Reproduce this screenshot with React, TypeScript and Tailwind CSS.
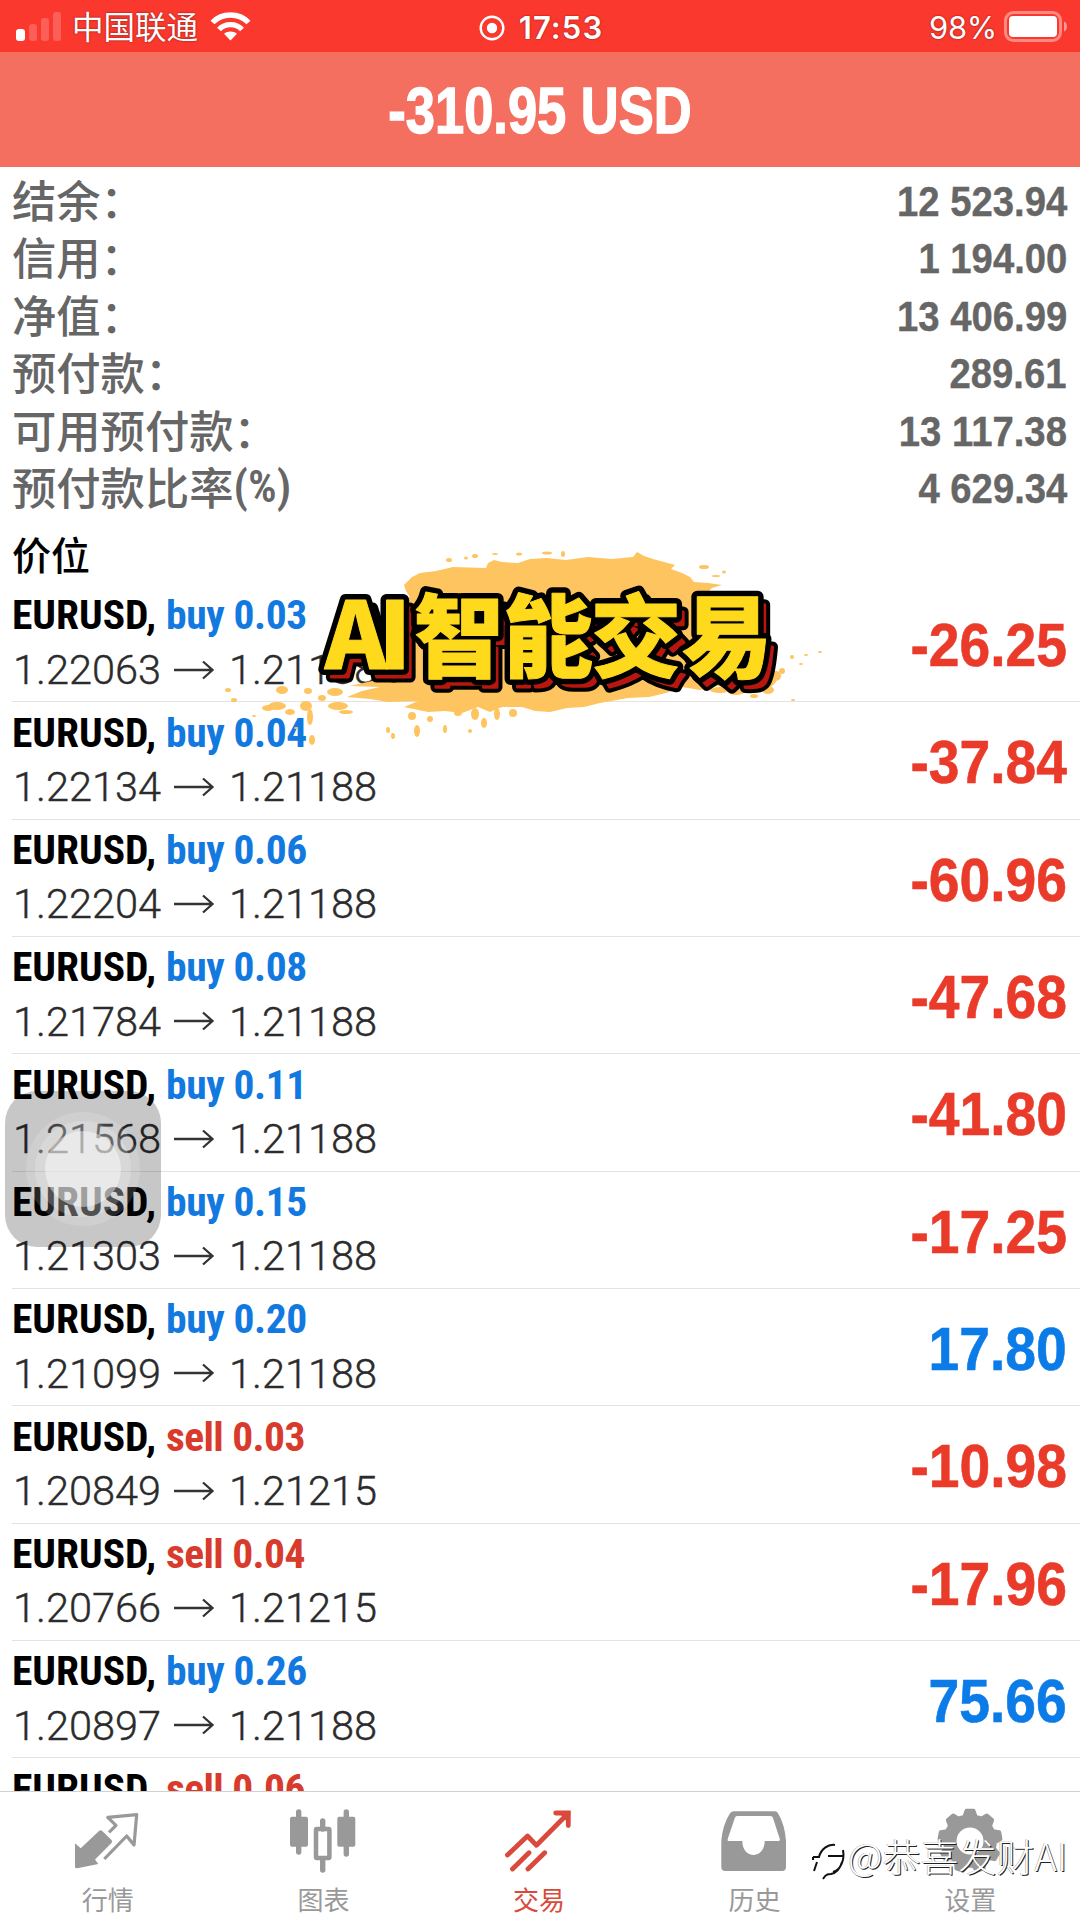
const summary = [
  { label: "结余：", value: "12 523.94" },
  { label: "信用：", value: "1 194.00" },
  { label: "净值：", value: "13 406.99" },
  { label: "预付款：", value: "289.61" },
  { label: "可用预付款：", value: "13 117.38" },
  { label: "预付款比率", suffix: "(%)", value: "4 629.34" },
];

const positions = [
  { side: "buy", lot: "0.03", open: "1.22063", now: "1.21188", profit: "-26.25" },
  { side: "buy", lot: "0.04", open: "1.22134", now: "1.21188", profit: "-37.84" },
  { side: "buy", lot: "0.06", open: "1.22204", now: "1.21188", profit: "-60.96" },
  { side: "buy", lot: "0.08", open: "1.21784", now: "1.21188", profit: "-47.68" },
  { side: "buy", lot: "0.11", open: "1.21568", now: "1.21188", profit: "-41.80" },
  { side: "buy", lot: "0.15", open: "1.21303", now: "1.21188", profit: "-17.25" },
  { side: "buy", lot: "0.20", open: "1.21099", now: "1.21188", profit: "17.80" },
  { side: "sell", lot: "0.03", open: "1.20849", now: "1.21215", profit: "-10.98" },
  { side: "sell", lot: "0.04", open: "1.20766", now: "1.21215", profit: "-17.96" },
  { side: "buy", lot: "0.26", open: "1.20897", now: "1.21188", profit: "75.66" },
  { side: "sell", lot: "0.06" },
];

function StatusBar() {
  return (
    <div className="relative flex h-[52px] shrink-0 items-center justify-between bg-[#fa382e] pr-[11px] pl-4 text-white">
      <div className="flex items-center">
        <svg width="46" height="30" viewBox="0 0 46 30" fill="#fff">
          <rect x="0" y="18" width="9" height="12" rx="3" />
          <rect x="13" y="13" width="8" height="17" rx="3" opacity=".2" />
          <rect x="25" y="7" width="8" height="23" rx="3" opacity=".2" />
          <rect x="37" y="1" width="8" height="29" rx="3" opacity=".2" />
        </svg>
        <span className="ml-[10px] font-['Noto_Sans_CJK_SC',sans-serif] text-[31.5px] leading-none [text-shadow:0_0_2px_#7a1510]">中国联通</span>
        <svg className="ml-3" width="41" height="31" viewBox="0 0 41 31" fill="none" stroke="#fff" strokeWidth="5.4">
          <path d="M2.5 11.5C12 1.5 29 1.5 38.5 11.5" />
          <path d="M9 18.5c6-6.5 17-6.5 23 0" />
          <path d="M20.5 29.5l-6.5-6.7c3.5-3.2 9.5-3.2 13 0z" fill="#fff" stroke="none" />
        </svg>
      </div>
      <div className="absolute inset-x-0 top-0 flex h-[55px] items-center justify-center gap-[14px] pl-[2px]">
        <svg width="26" height="26" viewBox="0 0 26 26" fill="none" stroke="#fff" strokeWidth="2.4">
          <circle cx="13" cy="13" r="11.3" />
          <circle cx="13" cy="13" r="5.2" fill="#fff" stroke="none" />
        </svg>
        <span className="font-['Inter',sans-serif] text-[31px] leading-none font-semibold tracking-[1.1px] [text-shadow:0_0_2px_#7a1510]">17:53</span>
      </div>
      <div className="flex items-center gap-[7px] pt-[2px]">
        <span className="font-['Inter',sans-serif] text-[31px] leading-none tracking-[-0.3px] [text-shadow:0_0_2px_#7a1510]">98%</span>
        <svg width="65" height="32" viewBox="0 0 65 32" fill="#fff">
          <rect x="1.5" y="1.5" width="55" height="28" rx="8" fill="none" stroke="#ff8a82" strokeWidth="3" />
          <rect x="5" y="5" width="48" height="21" rx="4" />
          <path d="M60 10.5c4 1.5 4 8.5 0 10z" opacity=".5" />
        </svg>
      </div>
    </div>
  );
}

function Position({ item }: { item: (typeof positions)[number] }) {
  const buy = item.side === "buy";
  const gain = !item.profit?.startsWith("-");
  return (
    <li className="ml-3 flex h-[117.33px] shrink-0 justify-between border-b border-[#e3e3e3] pr-[13px]">
      <div className="flex flex-col pt-[2px]">
        <div className="flex h-[56px] items-center font-['Roboto_Condensed',sans-serif] text-[41.5px] leading-none font-bold whitespace-pre">
          <span className="w-[154px] text-black">EURUSD,</span>
          <span className={buy ? "tracking-[-0.4px] text-[#1279e0]" : "tracking-[-0.6px] text-[#d83a2b]"}>
            {item.side} {item.lot}
          </span>
        </div>
        {item.open && (
          <div className="flex h-[53px] items-center font-['Roboto',sans-serif] text-[41.5px] leading-none font-light text-[#2b2b2b] [-webkit-text-stroke:0.4px_#2b2b2b]">
            <span className="w-[148px] pl-[1px]">{item.open}</span>
            <svg className="mx-[14px]" width="41" height="24" viewBox="0 0 41 24" fill="none" stroke="#333" strokeWidth="2.3">
              <path d="M0 12h39M29 3.5l9.5 8.5-9.5 8.5" />
            </svg>
            <span>{item.now}</span>
          </div>
        )}
      </div>
      {item.profit && (
        <span
          className={`origin-right scale-x-[0.905] self-center pt-[5px] font-['Liberation_Sans',sans-serif] text-[61px] leading-none font-bold ${gain ? "text-[#0b7be8] [-webkit-text-stroke:0.6px_#0b7be8]" : "text-[#ea3a2a] [-webkit-text-stroke:0.6px_#ea3a2a]"}`}
        >
          {item.profit}
        </span>
      )}
    </li>
  );
}

// loose drops round the brush stroke: x, y, rx, ry
const drops = [
  [449, 560, 3, 2], [466, 558, 2, 1.5], [475, 556, 3, 2], [495, 554, 3, 1], [519, 554, 3, 1.5],
  [547, 553, 5, 1.5], [563, 554, 2, 3], [704, 567, 5, 2], [716, 576, 4, 1], [724, 572, 2, 1.5],
  [228, 690, 3, 2], [234, 700, 3, 2], [268, 708, 6, 3], [277, 706, 9, 4], [282, 690, 6, 4],
  [290, 712, 5, 3], [306, 706, 6, 5], [310, 717, 3, 8], [312, 740, 3, 5], [308, 691, 4, 3],
  [335, 692, 8, 4], [338, 706, 10, 4], [346, 712, 7, 2], [296, 728, 2, 1], [388, 730, 2, 3],
  [412, 716, 4, 4], [417, 731, 3, 6], [430, 719, 3, 3], [445, 729, 2, 4], [458, 713, 4, 3],
  [475, 714, 4, 6], [484, 723, 3, 5], [497, 714, 3, 6], [513, 713, 4, 4], [470, 731, 2, 2],
  [393, 736, 2, 3], [782, 671, 3, 3], [792, 657, 2, 2], [801, 664, 2, 1], [806, 655, 2, 1],
  [820, 652, 2, 1], [793, 700, 2, 1], [736, 692, 8, 3], [754, 696, 4, 2], [768, 690, 6, 4],
  [776, 676, 5, 5], [720, 690, 10, 3], [254, 716, 2, 1], [322, 698, 4, 3],
];

function TitleText(props: React.SVGProps<SVGTextElement>) {
  return (
    <text
      y="669"
      fontFamily="'Noto Sans CJK SC', sans-serif"
      fontWeight="900"
      strokeLinejoin="round"
      {...props}
    >
      <tspan x="325" fontSize="93" textLength="86">AI</tspan>
      <tspan x="414 503 591 682" y="670" fontSize="90">智能交易</tspan>
    </text>
  );
}

function Sticker() {
  return (
    <svg className="pointer-events-none absolute top-[540px] left-[200px]" width="640" height="210" viewBox="200 540 640 210">
      <g fill="#fec45f">
        <path d="M404 585L412 577L420 573L436 571L453 567L486 568L488 563L494 560L502 562L518 563L530 559L547 558L566 560L588 557L612 559L633 557L637 552L644 556L653 559L664 562L675 565L671 569L682 573L690 577L694 582L708 583L722 585L712 588L706 594L720 610L760 640L772 655L776 682L768 690L752 684L736 690L718 686L700 690L682 687L666 693L649 697L628 698L600 703L584 707L567 708L550 712L535 711L522 707L502 707L490 712L478 707L462 713L445 711L428 712L404 707L418 701L388 702L370 699L347 697L362 691L380 687L350 686L372 681L408 677L416 640L380 630L384 613L392 605L410 597L406 591Z" />
        {drops.map(([x, y, rx, ry], i) => (
          <ellipse key={i} cx={x} cy={y} rx={rx} ry={ry} />
        ))}
      </g>
      <g transform="translate(7 8)">
        <TitleText fill="#000" stroke="#000" strokeWidth="11" />
        <TitleText fill="#b8170f" stroke="#b8170f" strokeWidth="3" />
      </g>
      <TitleText fill="#000" stroke="#000" strokeWidth="12" />
      <TitleText fill="#ffd91c" stroke="#ffd91c" strokeWidth="1" />
    </svg>
  );
}

function AssistiveTouch() {
  return (
    <div className="absolute top-[1091px] left-[5px] flex size-[156px] items-center justify-center rounded-[32px] bg-black/22">
      <div className="flex size-[114px] items-center justify-center rounded-full bg-white/15">
        <div className="flex size-[96px] items-center justify-center rounded-full bg-white/20">
          <div className="size-[76px] rounded-full bg-white/45" />
        </div>
      </div>
    </div>
  );
}

function gearPath() {
  const pts: string[] = [];
  for (let i = 0; i < 9; i++) {
    const mid = i * 40 - 90;
    const corners = [[-13, 25], [-6.5, 30.5], [6.5, 30.5], [13, 25]];
    corners.forEach(([deg, r]) => {
      const a = ((mid + deg) * Math.PI) / 180;
      pts.push(`${(36 + r * Math.cos(a)).toFixed(2)} ${(33 + r * Math.sin(a)).toFixed(2)}`);
    });
  }
  return `M${pts.join("L")}Z`;
}

const tabs = [
  {
    name: "行情",
    icon: (
      <>
        <path d="M3 35.3l5.7 5L27 23q1.7-1.5 3.2 0L39.5 32q1.3 1.5 0 3L23 51.5l3.3 4.5-21 4.3Q3 60.6 3 58.5z" stroke="none" />
        <path d="M37 24.3l7-7-8.3-8 29-2.6L62 37l-7.3-9-22.4 23" fill="none" strokeWidth="3.2" />
      </>
    ),
  },
  {
    name: "图表",
    icon: (
      <>
        <path d="M11.7 4v40M59.3 4v42M35.7 13v8M35.7 52v10" fill="none" strokeWidth="5.4" strokeLinecap="round" />
        <rect x="3" y="8.7" width="18" height="30" rx="2" stroke="none" />
        <rect x="50.3" y="8.7" width="18" height="30" rx="2" stroke="none" />
        <rect x="29" y="21" width="13.4" height="29" rx="1" fill="none" strokeWidth="4.5" />
      </>
    ),
  },
  {
    name: "交易",
    icon: (
      <>
        <path d="M4.5 47l20-19 9 9.3L65 5.5M26 44.7L9.5 61M41.7 44.7L25 61" fill="none" strokeWidth="4.8" strokeLinecap="round" />
        <path d="M52.7 5h12.600v12.5" fill="none" strokeWidth="4.8" strokeLinecap="round" strokeLinejoin="miter" />
        <path d="M56 5h9.3v10z" stroke="none" />
      </>
    ),
  },
  {
    name: "历史",
    icon: (
      <path
        fillRule="evenodd"
        stroke="none"
        d="M15 3.3H56q2 0 3 2Q66 17 67 33V59q0 4-4 4H6.3q-4 0-4-4V33Q3.5 17 11 5.3q1.5-2 4-2zM18 8Q16.500 8 16 9.500L8.700 31q-.5 2 1 2H23.300c0 18.500 22.400 18.500 22.400 0H59.500q1.700 0 1.300-2L54 10q-.6-2-2.500-2z"
      />
    ),
  },
  {
    name: "设置",
    icon: (
      <>
        <path d={gearPath()} strokeWidth="4" />
        <circle cx="36" cy="33" r="13.5" fill="#fff" stroke="none" />
      </>
    ),
  },
];

function TabBar() {
  return (
    <nav className="grid h-[129px] shrink-0 grid-cols-5 border-t border-[#d0d0d0] bg-white pr-[2px]">
      {tabs.map((tab) => (
        <div
          key={tab.name}
          className={`flex flex-col items-center pt-4 ${tab.name === "交易" ? "text-[#d94a3c]" : "text-[#999]"}`}
        >
          <svg width="72" height="68" viewBox="0 0 72 68" fill="currentColor" stroke="currentColor" strokeLinejoin="round">
            {tab.icon}
          </svg>
          <span className="mt-[10px] font-['Noto_Sans_CJK_SC',sans-serif] text-[26px] leading-none font-normal">{tab.name}</span>
        </div>
      ))}
    </nav>
  );
}

function Watermark() {
  return (
    <div className="absolute top-[1836px] left-[812px] flex items-start text-white">
      <svg className="mt-[4px]" width="35" height="46" viewBox="0 0 35 46" fill="none" strokeWidth="2">
        <path d="M3 22c2-9 9-15 17-14 10 1 14 12 10 21-3 7-10 8-15 8l-5 5" stroke="#fff" strokeWidth="5" />
        <path d="M1 17h6C9 9 16 4 23 5M1 17v3M16 16h15M31 10c2 11-3 20-10 22M5 22L2 31M30 22c-2 7-6 11-11 12-5 0-6 2-8 5" stroke="#111" />
      </svg>
      <span className="ml-[1px] font-['Noto_Sans_CJK_SC',sans-serif] text-[38px] leading-none font-light whitespace-nowrap [text-shadow:1px_1px_0_#222,-0.5px_0_0_#999]">
        @恭喜发财AI
      </span>
    </div>
  );
}

export default function App() {
  return (
    <div className="relative flex h-[1920px] w-[1080px] flex-col overflow-hidden bg-white">
      <StatusBar />
      <header className="flex h-[115px] shrink-0 items-center justify-center bg-[#f46f60] pt-[3px] font-['Liberation_Sans',sans-serif] text-[64px] leading-none font-bold text-white [-webkit-text-stroke:1.4px_#fff]">
        <h1 className="scale-x-[0.82]">-310.95 USD</h1>
      </header>
      <div className="flex min-h-0 flex-1 flex-col overflow-hidden">
        <dl className="flex shrink-0 flex-col pt-[5px]">
          {summary.map((row) => (
            <div key={row.label} className="flex h-[57.5px] items-center justify-between pr-[13px] pl-3 text-[#666]">
              <dt className="flex items-center pb-[4px] font-['Noto_Sans_CJK_SC',sans-serif] text-[44.3px] leading-none font-medium">
                {row.label}
                {row.suffix && <span className="font-['Roboto_Condensed',sans-serif] text-[45px] font-semibold">{row.suffix}</span>}
              </dt>
              <dd className="origin-right scale-x-[0.89] pt-[1px] font-['Liberation_Sans',sans-serif] text-[43px] leading-none font-bold [-webkit-text-stroke:0.4px_#666]">{row.value}</dd>
            </div>
          ))}
        </dl>
        <h2 className="flex h-[68px] shrink-0 items-center pt-[4px] pl-3 font-['Noto_Sans_CJK_SC',sans-serif] text-[39px] leading-none font-medium text-black">
          价位
        </h2>
        <ul className="flex flex-col">
          {positions.map((item, i) => (
            <Position key={i} item={item} />
          ))}
        </ul>
      </div>
      <TabBar />
      <Sticker />
      <AssistiveTouch />
      <Watermark />
    </div>
  );
}
